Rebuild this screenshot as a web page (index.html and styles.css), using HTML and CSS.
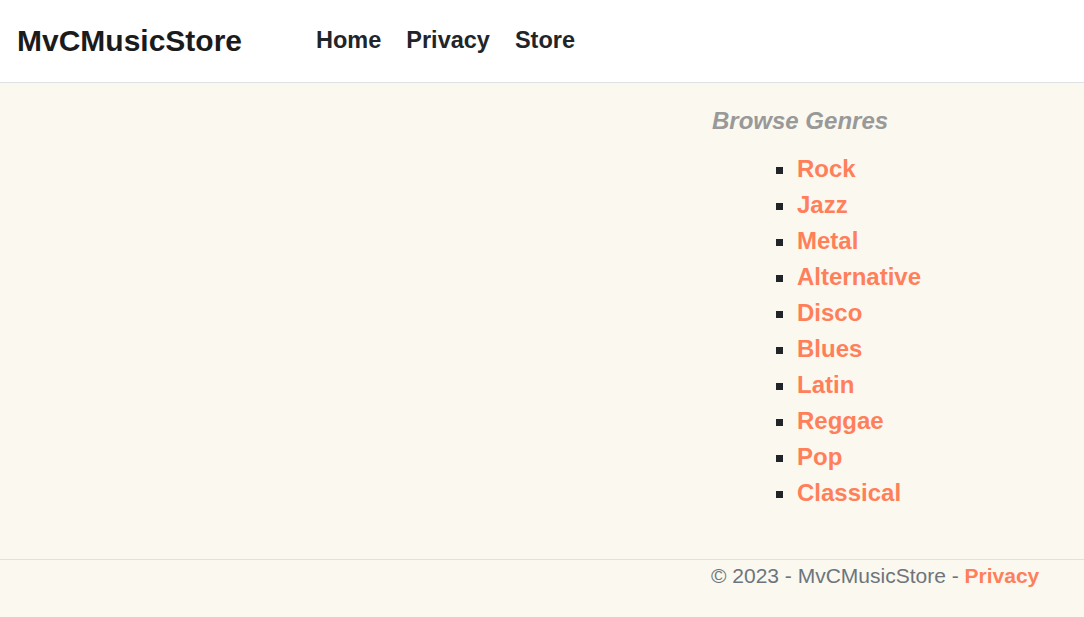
FILE: index.html
```html
<!DOCTYPE html>
<html lang="en">
<head>
<meta charset="utf-8">
<title>MvCMusicStore</title>
<link rel="stylesheet" href="styles.css">
</head>
<body>
<header class="site-header">
  <a class="brand" href="#">MvCMusicStore</a>
  <nav class="main-nav">
    <a href="#">Home</a>
    <a href="#">Privacy</a>
    <a href="#">Store</a>
  </nav>
</header>
<div class="page">
  <main class="content"></main>
  <aside class="sidebar">
    <h3 class="sidebar-title">Browse Genres</h3>
    <ul class="genres">
      <li><a href="#">Rock</a></li>
      <li><a href="#">Jazz</a></li>
      <li><a href="#">Metal</a></li>
      <li><a href="#">Alternative</a></li>
      <li><a href="#">Disco</a></li>
      <li><a href="#">Blues</a></li>
      <li><a href="#">Latin</a></li>
      <li><a href="#">Reggae</a></li>
      <li><a href="#">Pop</a></li>
      <li><a href="#">Classical</a></li>
    </ul>
  </aside>
</div>
<footer class="site-footer">
  <div class="footer-spacer"></div>
  <div class="footer-text">&copy; 2023 - MvCMusicStore - <a href="#">Privacy</a></div>
</footer>
</body>
</html>
```
FILE: styles.css
```css
html, body {
  margin: 0;
  padding: 0;
}
body {
  font-family: "Liberation Sans", Arial, sans-serif;
  background: #fbf8ef;
  color: #212529;
  min-height: 617px;
}
a {
  text-decoration: none;
}
.site-header {
  height: 82px;
  background: #ffffff;
  border-bottom: 1px solid #dee2e6;
  display: flex;
  align-items: center;
  padding-left: 17px;
}
.brand {
  font-size: 30px;
  font-weight: bold;
  color: #1b1b1b;
  width: 299px;
  margin-top: -1px;
}
.main-nav {
  display: flex;
  gap: 25px;
  margin-top: -2px;
}
.main-nav a {
  font-size: 23.5px;
  font-weight: bold;
  color: #212529;
}
.page {
  display: flex;
}
.content {
  flex: 1;
}
.sidebar {
  width: 372px;
  padding-top: 23px;
}
.sidebar-title {
  margin: 0;
  font-size: 24px;
  line-height: 29px;
  font-style: italic;
  font-weight: bold;
  color: #999999;
}
.genres {
  margin: 16px 0 48px;
  padding-left: 85px;
  list-style: square;
}
.genres li {
  font-size: 24px;
  line-height: 36px;
  color: #212529;
}
.genres a {
  color: #ff7f5a;
  font-weight: bold;
}
.site-footer {
  border-top: 1px solid #dee2e6;
  display: flex;
  padding-top: 4px;
}
.footer-spacer {
  width: 711px;
}
.footer-text {
  font-size: 21px;
  line-height: 24px;
  color: #6c757d;
}
.footer-text a {
  color: #ff7f5a;
  font-weight: bold;
}
```
